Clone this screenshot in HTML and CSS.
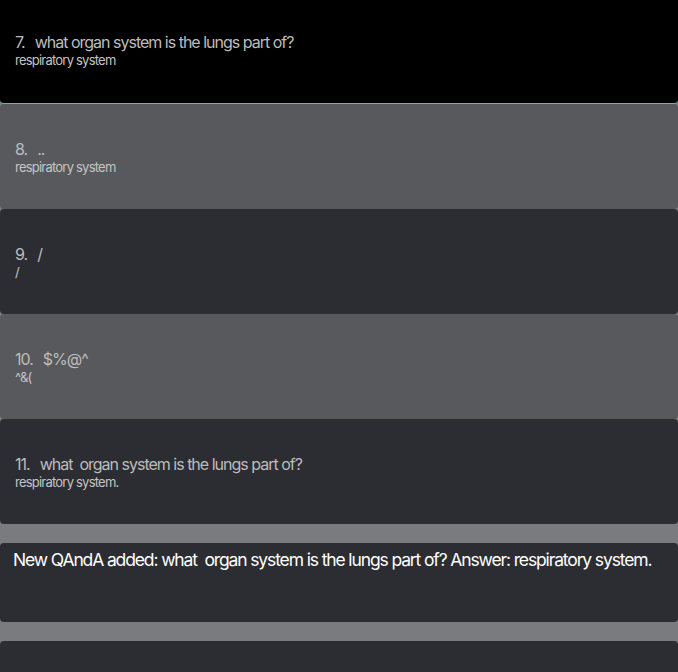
FILE: index.html
```html
<!DOCTYPE html>
<html>
<head>
<meta charset="utf-8">
<link rel="stylesheet" href="styles.css">
</head>
<body>
<div class="page">
  <ul class="qa-list">
    <li class="qa-card qa-active">
      <div class="qa-q"><span class="qa-num">7.</span>what organ system is the lungs part of?</div>
      <div class="qa-a">respiratory system</div>
    </li>
    <li class="qa-card qa-grey">
      <div class="qa-q"><span class="qa-num">8.</span>..</div>
      <div class="qa-a">respiratory system</div>
    </li>
    <li class="qa-card qa-dark">
      <div class="qa-q"><span class="qa-num">9.</span>/</div>
      <div class="qa-a">/</div>
    </li>
    <li class="qa-card qa-grey">
      <div class="qa-q"><span class="qa-num">10.</span>$%@^</div>
      <div class="qa-a">^&amp;(</div>
    </li>
    <li class="qa-card qa-dark">
      <div class="qa-q"><span class="qa-num">11.</span>what&nbsp; organ system is the lungs part of?</div>
      <div class="qa-a">respiratory system.</div>
    </li>
  </ul>
  <div class="notice">New QAndA added: what&nbsp; organ system is the lungs part of? Answer: respiratory system.</div>
  <div class="notice notice-empty"></div>
</div>
</body>
</html>
```
FILE: styles.css
```css
html, body {
  margin: 0;
  padding: 0;
  background: #7a7b7f;
  font-family: Inter, "Liberation Sans", sans-serif;
}
.page {
  display: flex;
  flex-direction: column;
  gap: 19px;
}
.qa-list {
  list-style: none;
  margin: 0;
  padding: 0;
  display: flex;
  flex-direction: column;
}
.qa-card {
  height: 105px;
  box-sizing: border-box;
  border-radius: 4px;
  padding: 0 15px;
  display: flex;
  flex-direction: column;
  justify-content: center;
}
.qa-active {
  height: 104px;
  background: #000;
  border-bottom: 1px solid #5bbfae;
  border-radius: 0 0 4px 4px;
  padding-bottom: 3px;
}
.qa-grey { background: #58595d; }
.qa-dark { background: #2c2d32; }
.qa-q {
  font-size: 16px;
  line-height: 20px;
  letter-spacing: -1px;
  color: #bcbcbc;
}
.qa-num {
  margin-right: 10px;
}
.qa-a {
  font-size: 13px;
  line-height: 16px;
  letter-spacing: -0.78px;
  color: #c4c4c4;
}
.notice {
  background: #2c2d32;
  border-radius: 4px;
  height: 79px;
  box-sizing: border-box;
  padding: 6px 13px;
  color: #fff;
  font-size: 17.5px;
  line-height: 22px;
  letter-spacing: -1.13px;
}
.notice-empty {
  height: 40px;
}
```
